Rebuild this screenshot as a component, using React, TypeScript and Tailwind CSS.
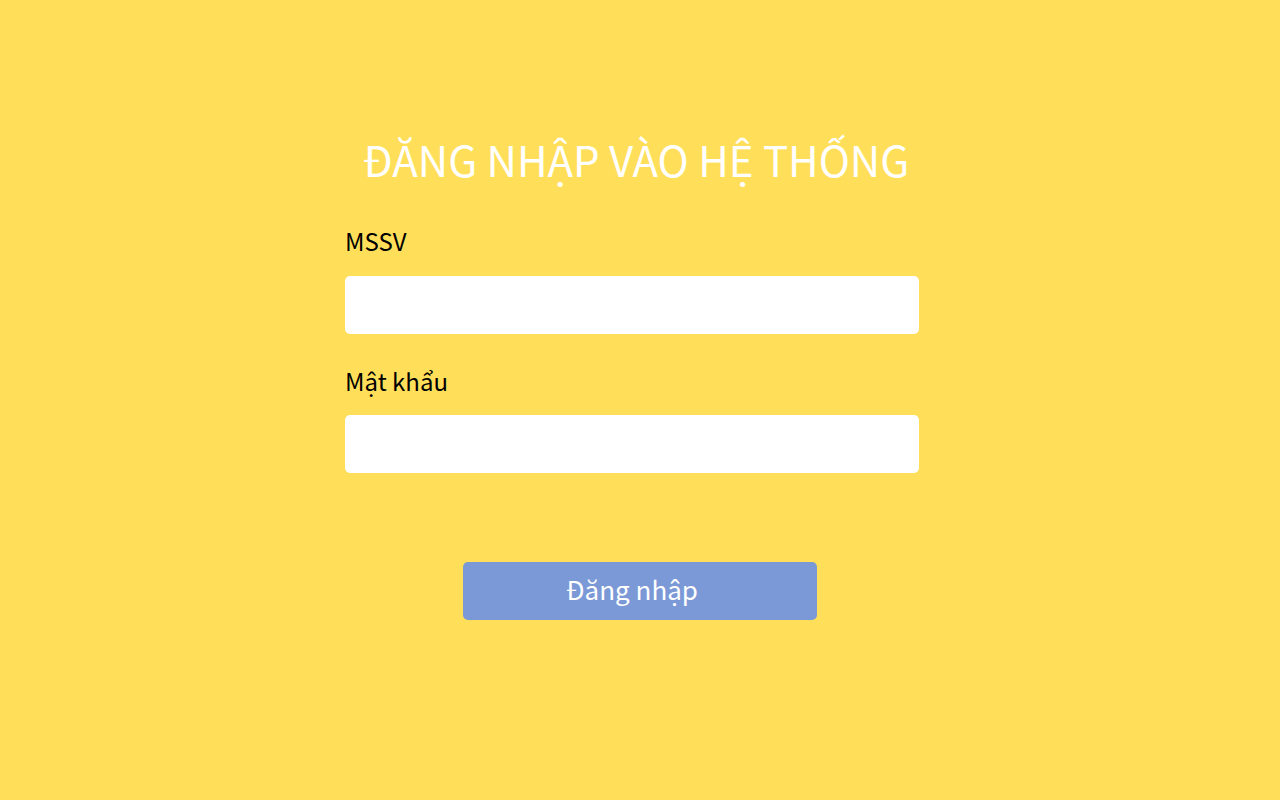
import React from 'react';

const font = { fontFamily: '"Noto Sans CJK SC", "Noto Sans", sans-serif' };

export default function App() {
  return (
    <div className="min-h-screen w-full bg-[#FFDF5A]" style={font}>
      <div className="w-[590px] mx-auto pt-[130px] flex flex-col">
        <h1 className="w-[582px] text-center text-white text-[42px] leading-[58px] font-normal">
          ĐĂNG NHẬP VÀO HỆ THỐNG
        </h1>

        <form className="mt-[35px] flex flex-col" onSubmit={(e) => e.preventDefault()}>
          <label className="text-black text-[24px] leading-[36px]">MSSV</label>
          <input
            type="text"
            className="mt-[17px] w-[574px] h-[58px] bg-white rounded-[5px] outline-none px-3 text-xl"
          />

          <label className="mt-[29px] text-black text-[24px] leading-[36px]">Mật khẩu</label>
          <input
            type="password"
            className="mt-[16px] w-[574px] h-[58px] bg-white rounded-[5px] outline-none px-3 text-xl"
          />

          <button
            type="submit"
            className="mt-[89px] mx-auto w-[354px] h-[58px] rounded-[5px] bg-[#7B99D6] text-white text-[26px] pr-[16px] pb-[5px]"
          >
            Đăng nhập
          </button>
        </form>
      </div>
    </div>
  );
}
